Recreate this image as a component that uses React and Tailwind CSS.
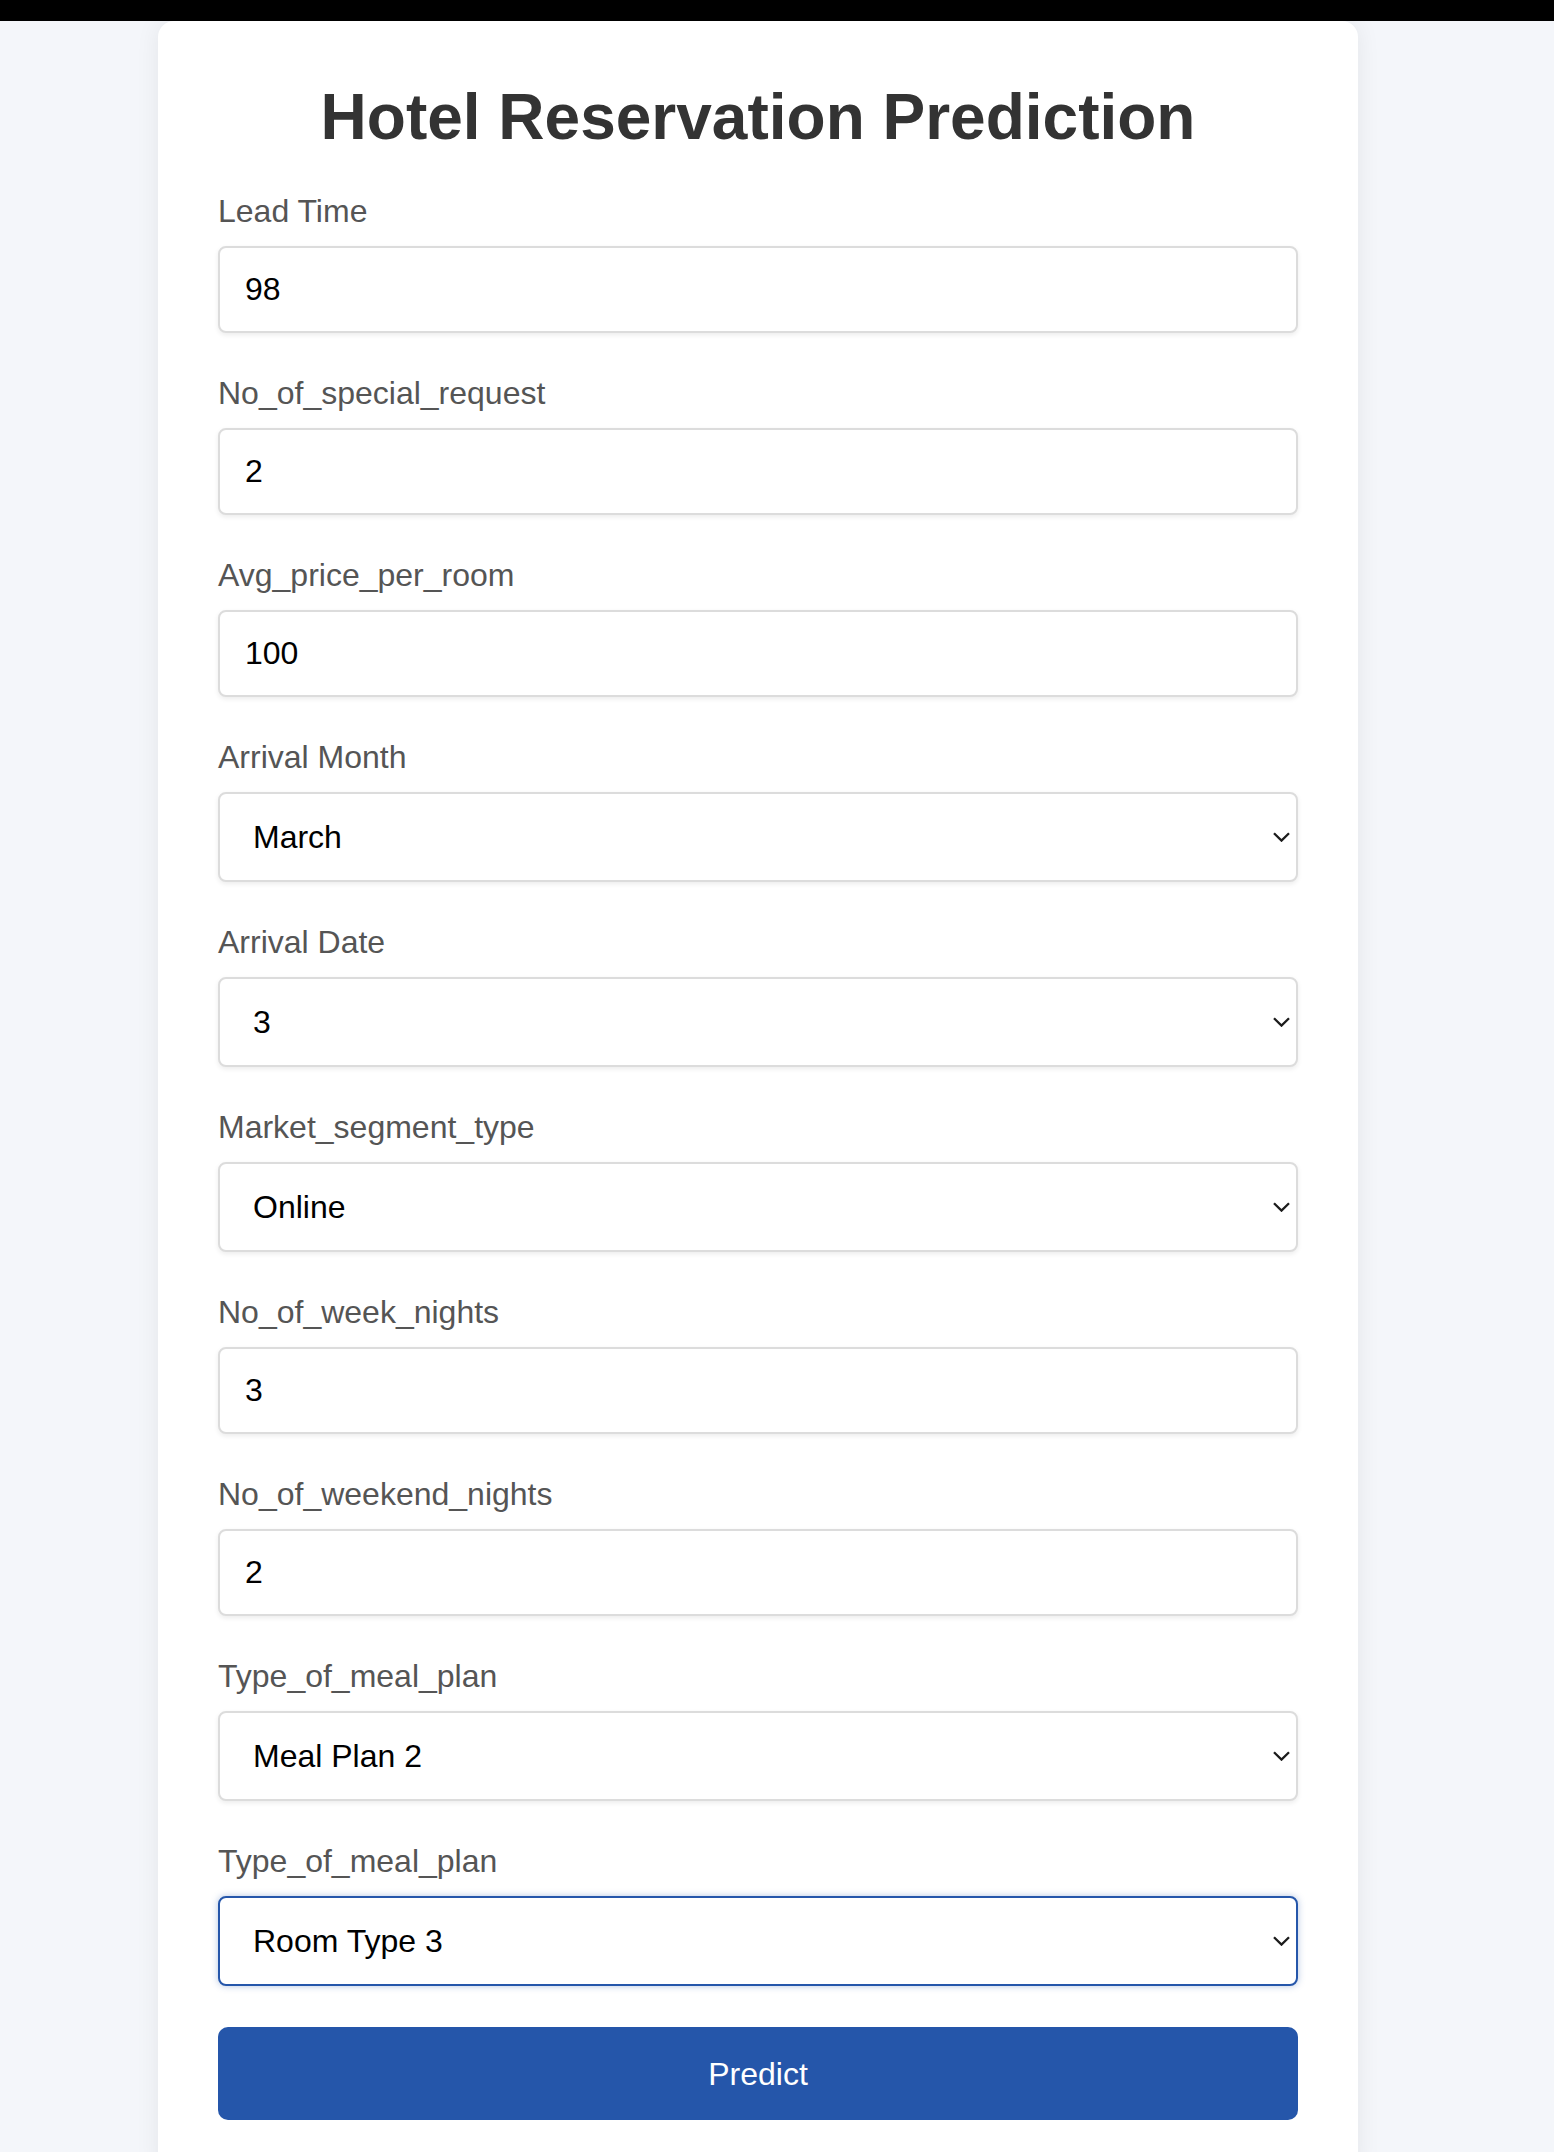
import React, { useState } from 'react';

const inputFields = {
  leadTime: { label: 'Lead Time', value: '98' },
  specialRequests: { label: 'No_of_special_request', value: '2' },
  avgPrice: { label: 'Avg_price_per_room', value: '100' },
};

const Chevron = () => (
  <svg
    className="pointer-events-none absolute right-[8px] top-1/2 -translate-y-1/2"
    width="17"
    height="10"
    viewBox="0 0 17 10"
    fill="none"
  >
    <polyline points="1,1.2 8.5,8.6 16,1.2" stroke="#1c1c1c" strokeWidth="2.3" />
  </svg>
);

const Field = ({ label, children }) => (
  <div className="flex flex-col gap-[17px]">
    <label className="block text-[32px] leading-[36px] text-[#555]">{label}</label>
    {children}
  </div>
);

const TextInput = ({ value, onChange }) => (
  <input
    type="text"
    value={value}
    onChange={(e) => onChange(e.target.value)}
    className="h-[87px] w-full rounded-[8px] border-2 border-[#dcdcdc] bg-white px-[25px] text-[32px] text-black shadow-[0_2px_5px_rgba(0,0,0,0.08)] outline-none"
  />
);

const SelectInput = ({ value, options, onChange, focused = false }) => (
  <div className="relative">
    <select
      value={value}
      onChange={(e) => onChange(e.target.value)}
      className={`h-[90px] w-full appearance-none rounded-[8px] border-2 bg-white pl-[33px] pr-[40px] text-[32px] text-black outline-none ${
        focused
          ? 'border-[#2556aa] shadow-[0_0_7px_rgba(37,86,170,0.35)]'
          : 'border-[#dcdcdc] shadow-[0_2px_5px_rgba(0,0,0,0.08)]'
      }`}
    >
      {options.map((opt) => (
        <option key={opt} value={opt}>
          {opt}
        </option>
      ))}
    </select>
    <Chevron />
  </div>
);

const months = [
  'January', 'February', 'March', 'April', 'May', 'June',
  'July', 'August', 'September', 'October', 'November', 'December',
];
const dates = Array.from({ length: 31 }, (_, i) => String(i + 1));

export default function App() {
  const [form, setForm] = useState({
    leadTime: '98',
    specialRequests: '2',
    avgPrice: '100',
    month: 'March',
    date: '3',
    segment: 'Online',
    weekNights: '3',
    weekendNights: '2',
    mealPlan: 'Meal Plan 2',
    roomType: 'Room Type 3',
  });

  const set = (key) => (val) => setForm((f) => ({ ...f, [key]: val }));

  return (
    <div className="min-h-screen bg-[#f4f6fa] font-['Liberation_Sans',Arial,sans-serif]">
      <div className="h-[21px] bg-black" />
      <div className="ml-[158px] w-[1200px] rounded-[16px] bg-white px-[60px] pt-[59px] pb-[60px] shadow-[0_0_24px_rgba(0,0,0,0.07)]">
        <h1 className="text-center text-[64px] font-bold leading-[74px] text-[#333]">
          Hotel Reservation Prediction
        </h1>

        <form className="mt-[39px] flex flex-col" onSubmit={(e) => e.preventDefault()}>
          <div className="flex flex-col gap-[42px]">
            {Object.entries(inputFields).map(([key, f]) => (
              <Field key={key} label={f.label}>
                <TextInput value={form[key]} onChange={set(key)} />
              </Field>
            ))}

            <Field label="Arrival Month">
              <SelectInput value={form.month} options={months} onChange={set('month')} />
            </Field>

            <Field label="Arrival Date">
              <SelectInput value={form.date} options={dates} onChange={set('date')} />
            </Field>

            <Field label="Market_segment_type">
              <SelectInput
                value={form.segment}
                options={['Online', 'Offline', 'Corporate', 'Aviation', 'Complementary']}
                onChange={set('segment')}
              />
            </Field>

            <Field label="No_of_week_nights">
              <TextInput value={form.weekNights} onChange={set('weekNights')} />
            </Field>

            <Field label="No_of_weekend_nights">
              <TextInput value={form.weekendNights} onChange={set('weekendNights')} />
            </Field>

            <Field label="Type_of_meal_plan">
              <SelectInput
                value={form.mealPlan}
                options={['Meal Plan 1', 'Meal Plan 2', 'Meal Plan 3', 'Not Selected']}
                onChange={set('mealPlan')}
              />
            </Field>

            {/* label repeated as in the original form */}
            <Field label="Type_of_meal_plan">
              <SelectInput
                value={form.roomType}
                options={[
                  'Room Type 1', 'Room Type 2', 'Room Type 3', 'Room Type 4',
                  'Room Type 5', 'Room Type 6', 'Room Type 7',
                ]}
                onChange={set('roomType')}
                focused
              />
            </Field>
          </div>

          <button
            type="submit"
            className="mt-[41px] h-[93px] w-full rounded-[10px] bg-[#2556aa] text-[32px] text-white"
          >
            Predict
          </button>
        </form>
      </div>
    </div>
  );
}
